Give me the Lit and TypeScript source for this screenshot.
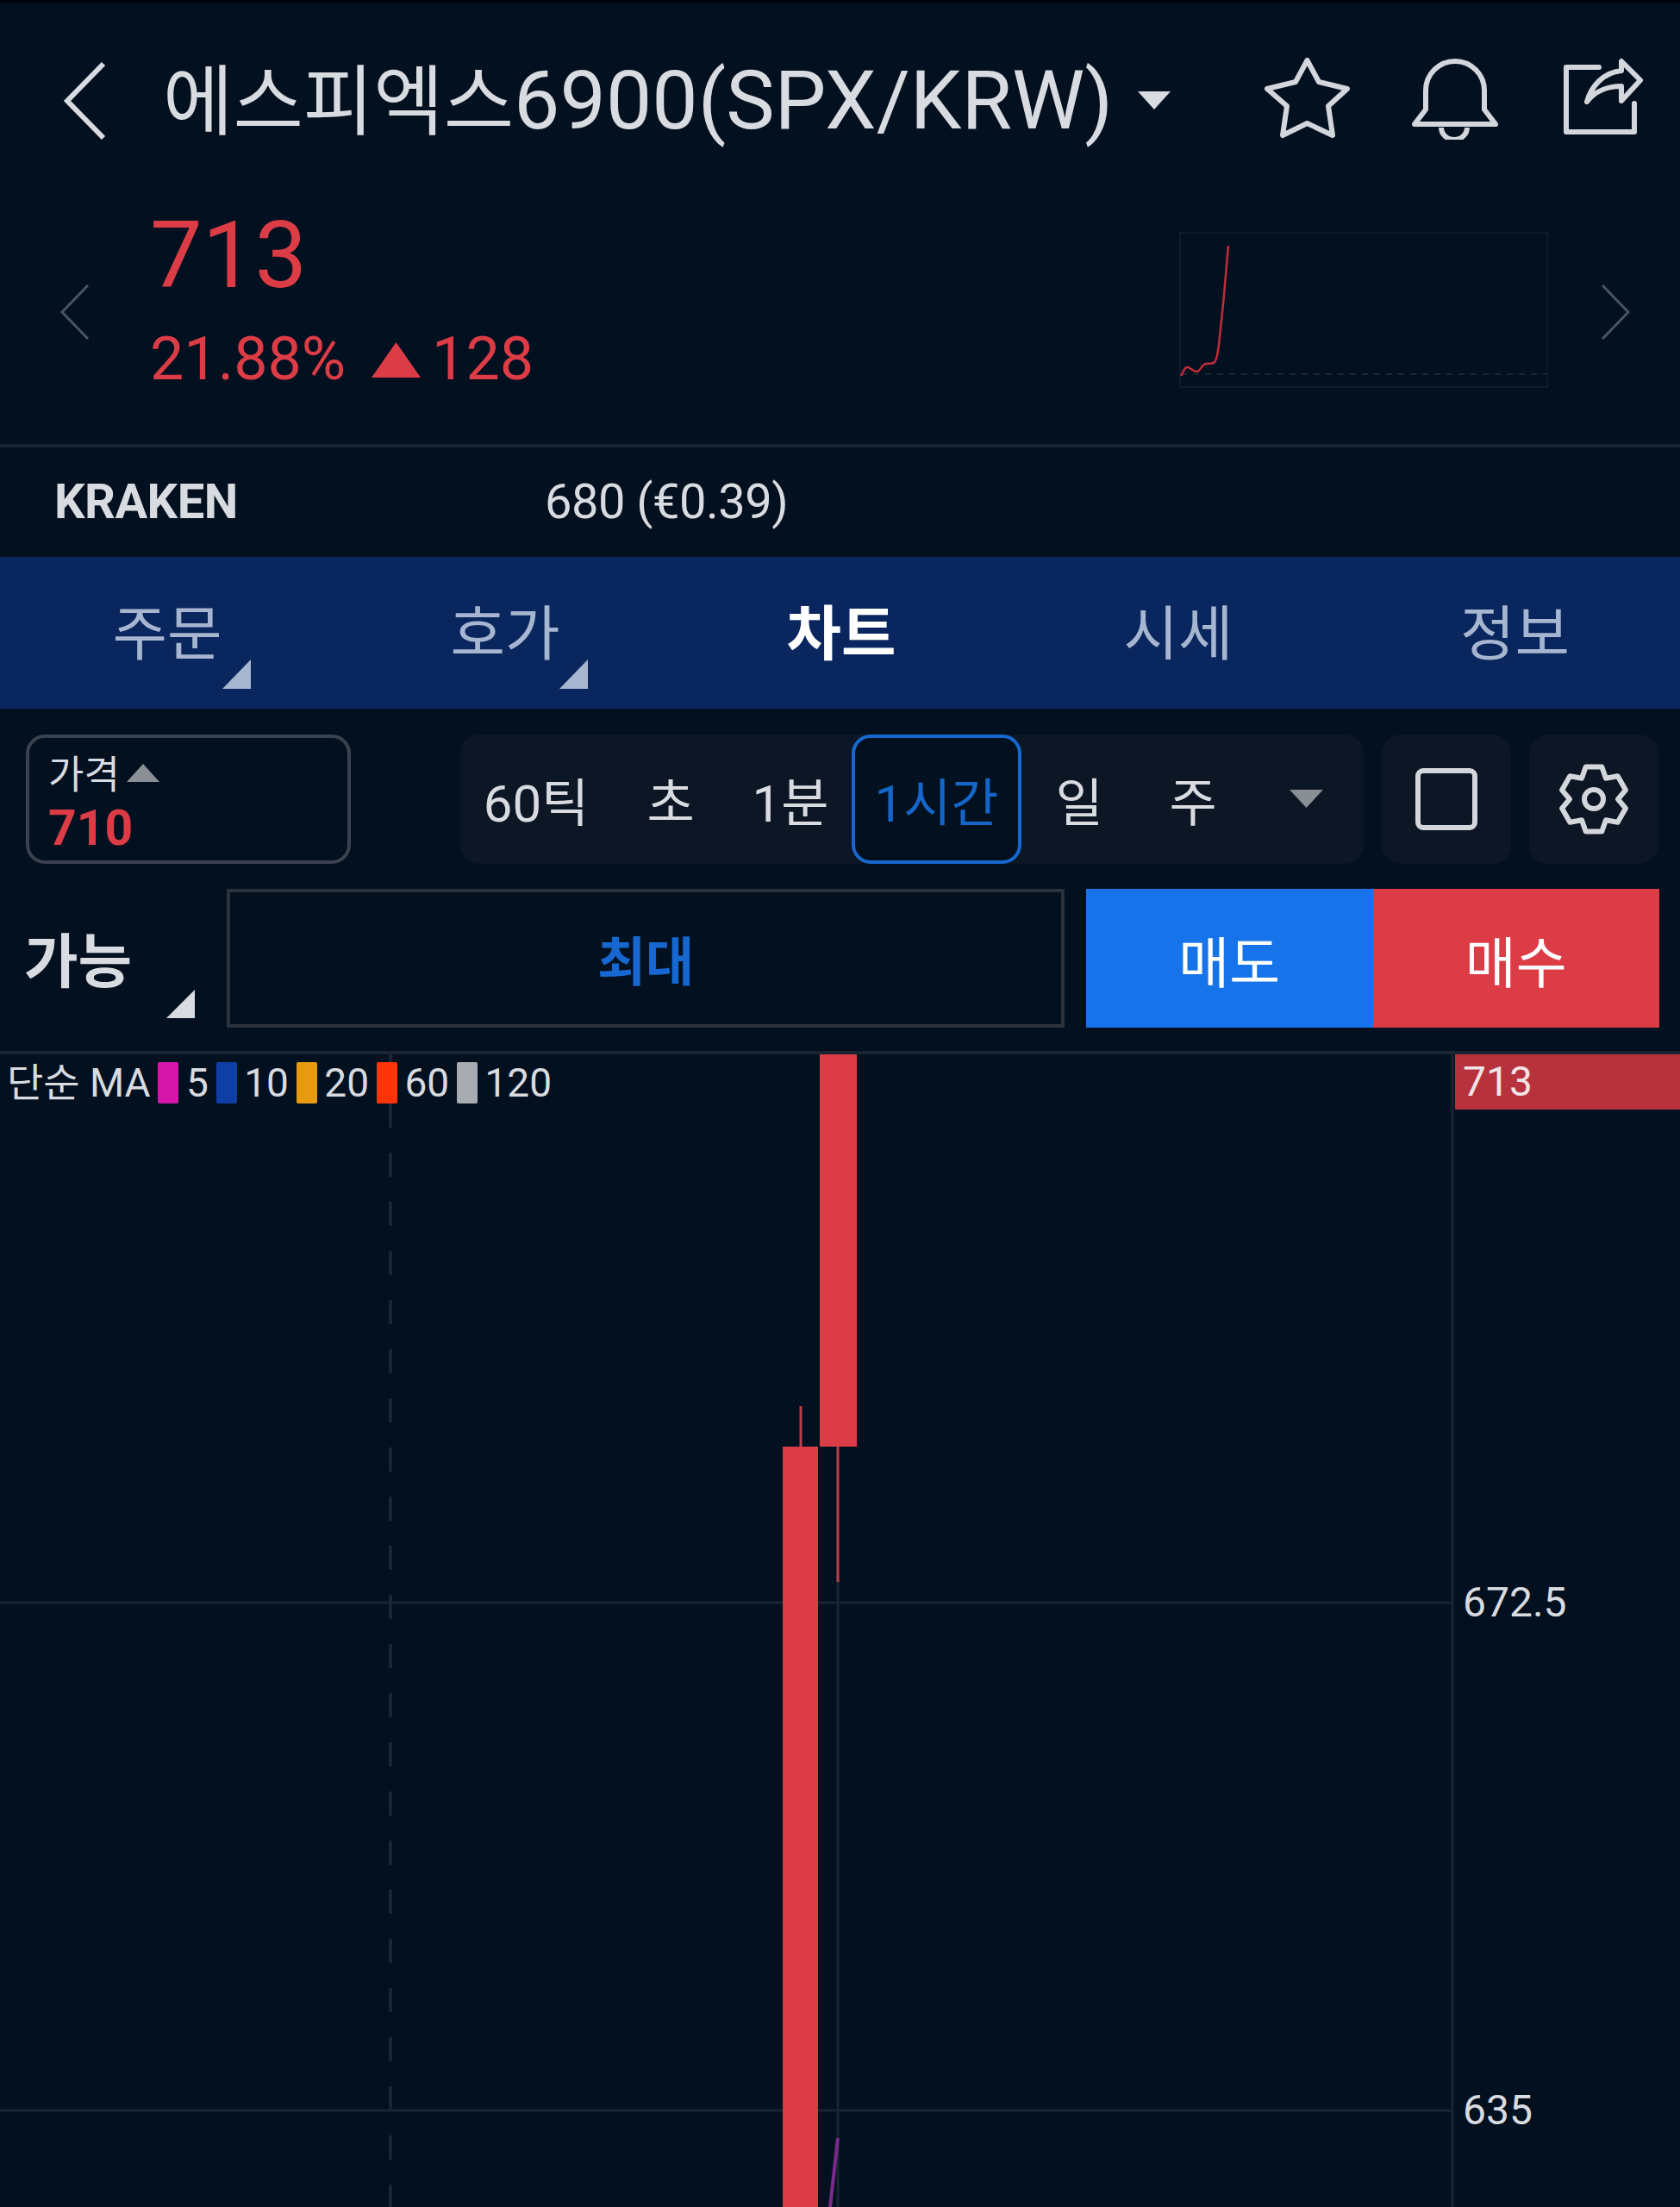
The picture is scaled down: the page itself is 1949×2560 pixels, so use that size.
import {LitElement, html, css, svg} from 'lit';
import {customElement} from 'lit/decorators.js';

// six tooth gear, centred on 0,0
const gearPath = () => {
  const pts: string[] = [];
  for (let k = 0; k < 6; k++) {
    const a = -90 + k * 60;
    for (const [d, r] of [[-14, 38.5], [14, 38.5], [30, 28]]) {
      const rad = ((a + d) * Math.PI) / 180;
      pts.push(`${(r * Math.cos(rad)).toFixed(1)} ${(r * Math.sin(rad)).toFixed(1)}`);
    }
  }
  return 'M' + pts.join('L') + 'Z';
};

const TABS = [
  {label: '주문', corner: true},
  {label: '호가', corner: true},
  {label: '차트', active: true},
  {label: '시세'},
  {label: '정보'},
];

const PERIODS = [
  {label: '60틱'},
  {label: '초'},
  {label: '1분'},
  {label: '1시간', active: true},
  {label: '일'},
  {label: '주'},
];

const MA = [
  {color: '#d417aa', label: '5'},
  {color: '#0f3fa5', label: '10'},
  {color: '#e69a0f', label: '20'},
  {color: '#ff3408', label: '60'},
  {color: '#a8abb0', label: '120'},
];

@customElement('app-root')
export class AppRoot extends LitElement {
  static styles = css`
    :host {
      display: block;
      width: 1949px;
      height: 2560px;
      overflow: hidden;
      background: #03101f;
      color: #d8dbe0;
      font-family: Roboto, 'Noto Sans CJK KR', sans-serif;
    }
    svg {
      display: block;
      flex: none;
    }
    .header {
      display: flex;
      align-items: center;
      height: 230px;
      border-top: 3px solid #00040c;
      box-sizing: border-box;
      padding-left: 72px;
    }
    .back {
      width: 52px;
      height: 92px;
      margin-right: 65px;
    }
    .title {
      font-size: 95px;
      line-height: 1;
      white-space: nowrap;
      width: 1131px;
    }
    .title b {
      font-weight: 400;
      font-size: 88.5px;
    }
    .caret {
      width: 38px;
      height: 21px;
      margin-right: 104px;
    }
    .head-icon {
      width: 110px;
      height: 100px;
      margin: -9px 61px 0 0;
    }
    .head-icon.bell {
      margin-right: 63px;
    }
    .head-icon:last-child {
      margin-right: 0;
    }

    .quote {
      display: flex;
      align-items: center;
      height: 285px;
      padding: 0 58px 0 70px;
    }
    .nav {
      width: 33px;
      height: 64px;
      margin-top: -21px;
    }
    .price {
      flex: 1;
      margin-left: 71px;
      color: #dc3c46;
      align-self: flex-start;
      padding-top: 10px;
    }
    .last {
      font-size: 108px;
      line-height: 112px;
    }
    .change {
      display: flex;
      align-items: center;
      font-size: 70px;
      line-height: 72px;
      margin-top: 28px;
    }
    .up {
      width: 57px;
      height: 41px;
      margin: 2px 13px 0 30px;
    }
    .spark {
      width: 428px;
      height: 181px;
      margin: -27px 62px 0 0;
    }

    .rule {
      height: 4px;
      background: #1a2531;
    }
    .exchange {
      display: flex;
      align-items: center;
      height: 127px;
      box-sizing: border-box;
      padding: 0 0 2px 63px;
      font-size: 56px;
    }
    .exchange strong {
      width: 569px;
      font-weight: 700;
      letter-spacing: -0.5px;
    }
    .exchange span {
      letter-spacing: -0.5px;
    }

    .tabs {
      display: grid;
      grid-template-columns: 388px 396px 384px 398px 1fr;
      height: 176px;
      background: #09265e;
    }
    .tab {
      position: relative;
      display: flex;
      align-items: center;
      justify-content: center;
      font-size: 69px;
      color: #a7b6d0;
      padding-bottom: 8px;
      box-sizing: border-box;
    }
    .tab.active {
      color: #fff;
      font-weight: 700;
    }
    .corner {
      position: absolute;
      width: 33px;
      height: 34px;
      left: 258px;
      top: 119px;
    }
    .tab:nth-child(2) .corner {
      left: 261px;
    }

    .toolbar {
      display: flex;
      height: 150px;
      margin: 30px 25px 0 30px;
      gap: 21px;
    }
    .price-box {
      width: 377px;
      box-sizing: border-box;
      border: 4px solid #39424e;
      border-radius: 22px;
      padding: 18px 0 0 22px;
      margin-right: 106px;
    }
    .price-label {
      display: flex;
      align-items: center;
      font-size: 45px;
      line-height: 52px;
    }
    .price-label svg {
      width: 38px;
      height: 21px;
      margin-left: 8px;
      margin-top: -8px;
    }
    .price-value {
      color: #dc3c46;
      font-size: 57px;
      font-weight: 700;
      line-height: 58px;
      margin-top: 6px;
    }
    .periods {
      display: grid;
      grid-template-columns: 176px 136px 142px 197px 134px 130px 1fr;
      width: 1048px;
      background: #0d1624;
      border-radius: 22px;
    }
    .period {
      display: flex;
      align-items: center;
      justify-content: center;
      font-size: 60px;
      box-sizing: border-box;
      padding-bottom: 2px;
    }
    .period.active {
      border: 4px solid #1668d0;
      border-radius: 22px;
      background: #03101f;
      color: #1566c8;
    }
    .period svg {
      width: 39px;
      height: 21px;
    }
    .tool {
      display: flex;
      align-items: center;
      justify-content: center;
      width: 150px;
      background: #0d1624;
      border-radius: 22px;
    }

    .trade {
      display: flex;
      height: 161px;
      margin: 29px 24px 0 0;
    }
    .avail {
      position: relative;
      display: flex;
      align-items: center;
      width: 263px;
      box-sizing: border-box;
      padding: 0 0 0 28px;
      font-size: 68px;
      font-weight: 700;
    }
    .avail span {
      margin-top: -2px;
    }
    .avail svg {
      position: absolute;
      left: 193px;
      top: 117px;
      width: 33px;
      height: 33px;
    }
    .max {
      display: flex;
      align-items: center;
      justify-content: center;
      width: 972px;
      box-sizing: border-box;
      border: 4px solid #2a323d;
      color: #1668d0;
      font-size: 61px;
      font-weight: 700;
      margin-right: 25px;
    }
    .side {
      display: flex;
      align-items: center;
      justify-content: center;
      flex: 1;
      color: #fff;
      font-size: 64px;
    }
    .side.sell {
      background: #1673ea;
    }
    .side.buy {
      background: #dc3c46;
    }

    .rule.chart-top {
      margin-top: 27px;
    }
    .chart {
      position: relative;
      height: 1337px;
    }
    .chart svg {
      position: absolute;
      inset: 0;
    }
    .legend {
      position: absolute;
      left: 8px;
      top: 9px;
      display: flex;
      align-items: center;
      gap: 8.7px;
      font-size: 46px;
      line-height: 48px;
    }
    .swatch {
      width: 24px;
      height: 48px;
      border-radius: 2px;
    }
    .tag {
      position: absolute;
      left: 1688px;
      top: 0;
      width: 261px;
      height: 64px;
      line-height: 64px;
      box-sizing: border-box;
      padding-left: 9px;
      background: #b8323d;
      color: #f0e4e6;
      font-size: 48px;
    }
    .tick {
      position: absolute;
      left: 1697px;
      font-size: 48px;
      line-height: 48px;
    }
  `;

  render() {
    return html`
      <div class="header">
        <svg class="back" viewBox="0 0 52 92" fill="none" stroke="#d8dbe0" stroke-width="6">
          <path d="M48 3 6 46 48 89" />
        </svg>
        <div class="title"><b>에스피엑스</b>6900(SPX/KRW)</div>
        <svg class="caret" viewBox="0 0 38 21"><path d="M0 0H38L19 21Z" fill="#d8dbe0" /></svg>
        <svg class="head-icon" viewBox="1462 62 110 100" fill="none" stroke="#d3d6db" stroke-width="6" stroke-linejoin="round">
          <path d="M1516.5 70 1530 95 1563 103 1541 123 1546 157 1516.5 143 1488 157 1493 123 1470 103 1503 95Z" />
        </svg>
        <svg class="head-icon bell" viewBox="1633 62 110 100" fill="none" stroke="#d3d6db" stroke-width="6" stroke-linejoin="round">
          <path d="M1654 127V105A34 34 0 0 1 1722 105V127L1735 144H1641Z" />
          <path d="M1672 148A15 14 0 0 0 1702 148" />
        </svg>
        <svg class="head-icon" viewBox="1806 62 110 100" fill="none" stroke="#d3d6db" stroke-width="6" stroke-linejoin="round" stroke-linecap="round">
          <path d="M1855 78H1817V153H1896V120" />
          <path d="M1903 93 1881 71V82C1860 84 1846 100 1841 118 1850 106 1865 100 1881 100V117Z" />
        </svg>
      </div>

      <div class="quote">
        <svg class="nav" viewBox="0 0 33 64" fill="none" stroke="#4a5563" stroke-width="3"><path d="M32 1 2 32 32 63" /></svg>
        <div class="price">
          <div class="last">713</div>
          <div class="change">
            21.88%
            <svg class="up" viewBox="0 0 57 41"><path d="M28.5 0 57 41H0Z" fill="#dc3c46" /></svg>
            128
          </div>
        </div>
        <svg class="spark" viewBox="1367 269 428 181" fill="none">
          <rect x="1368" y="270" width="426" height="179" stroke="#101b2a" stroke-width="2" />
          <path d="M1369 434H1794" stroke="#1a2531" stroke-width="2" stroke-dasharray="7 7" />
          <path d="M1369 436C1372 432 1373 425 1377 426S1384 432 1388 431 1393 423 1398 422 1405 423 1408 420 1411 412 1413 400L1418 353 1424 285" stroke="#c22b38" stroke-width="2.5" />
        </svg>
        <svg class="nav" viewBox="0 0 33 64" fill="none" stroke="#4a5563" stroke-width="3"><path d="M1 1 31 32 1 63" /></svg>
      </div>
      <div class="rule"></div>

      <div class="exchange"><strong>KRAKEN</strong><span>680 (€0.39)</span></div>

      <div class="tabs">
        ${TABS.map((t) => html`
          <div class="tab ${t.active ? 'active' : ''}">
            ${t.label}
            ${t.corner ? html`<svg class="corner" viewBox="0 0 33 34"><path d="M33 0V34H0Z" fill="#a7b6d0" /></svg>` : ''}
          </div>
        `)}
      </div>

      <div class="toolbar">
        <div class="price-box">
          <div class="price-label">
            가격
            <svg viewBox="0 0 38 21"><path d="M19 0 38 21H0Z" fill="#8a8f96" /></svg>
          </div>
          <div class="price-value">710</div>
        </div>
        <div class="periods">
          ${PERIODS.map((p) => html`<div class="period ${p.active ? 'active' : ''}">${p.label}</div>`)}
          <div class="period"><svg viewBox="0 0 39 21"><path d="M0 0H39L19.5 21Z" fill="#8a8f96" /></svg></div>
        </div>
        <div class="tool">
          <svg width="72" height="72" viewBox="0 0 72 72" fill="none" stroke="#d3d6db" stroke-width="6">
            <rect x="3" y="3" width="66" height="66" rx="6" />
          </svg>
        </div>
        <div class="tool">
          <svg width="96" height="96" viewBox="-48 -48 96 96" fill="none" stroke="#d3d6db" stroke-width="6" stroke-linejoin="round">
            <path d=${gearPath()} />
            <circle r="11" />
          </svg>
        </div>
      </div>

      <div class="trade">
        <div class="avail">
          <span>가능</span>
          <svg viewBox="0 0 33 33"><path d="M33 0V33H0Z" fill="#d8dbe0" /></svg>
        </div>
        <div class="max">최대</div>
        <div class="side sell">매도</div>
        <div class="side buy">매수</div>
      </div>

      <div class="rule chart-top"></div>
      <div class="chart">
        <svg width="1949" height="1337" viewBox="0 1223 1949 1337" fill="none">
          ${svg`
            <path d="M453 1223V2560" stroke="#1a2533" stroke-width="4" stroke-dasharray="28 29" />
            <path d="M0 1859H1685M0 2448H1685" stroke="#1a2533" stroke-width="3" />
            <path d="M1685 1223V2560" stroke="#1a2533" stroke-width="3" />
            <path d="M972 1835V2560" stroke="#1a2533" stroke-width="3" />
            <path d="M929 1631V1678" stroke="#b8404a" stroke-width="3" />
            <path d="M972 1678V1835" stroke="#b8404a" stroke-width="3" />
            <rect x="908" y="1678" width="41" height="882" fill="#dc3c46" />
            <rect x="951" y="1223" width="43" height="455" fill="#dc3c46" />
            <path d="M972 2480 963 2560" stroke="#7b2a8c" stroke-width="4" />
          `}
        </svg>
        <div class="legend">
          <span>단순 MA</span>
          ${MA.map((m) => html`
            <div class="swatch" style="background:${m.color}"></div>
            <span>${m.label}</span>
          `)}
        </div>
        <div class="tag">713</div>
        <div class="tick" style="top:612px">672.5</div>
        <div class="tick" style="top:1201px">635</div>
      </div>
    `;
  }
}
